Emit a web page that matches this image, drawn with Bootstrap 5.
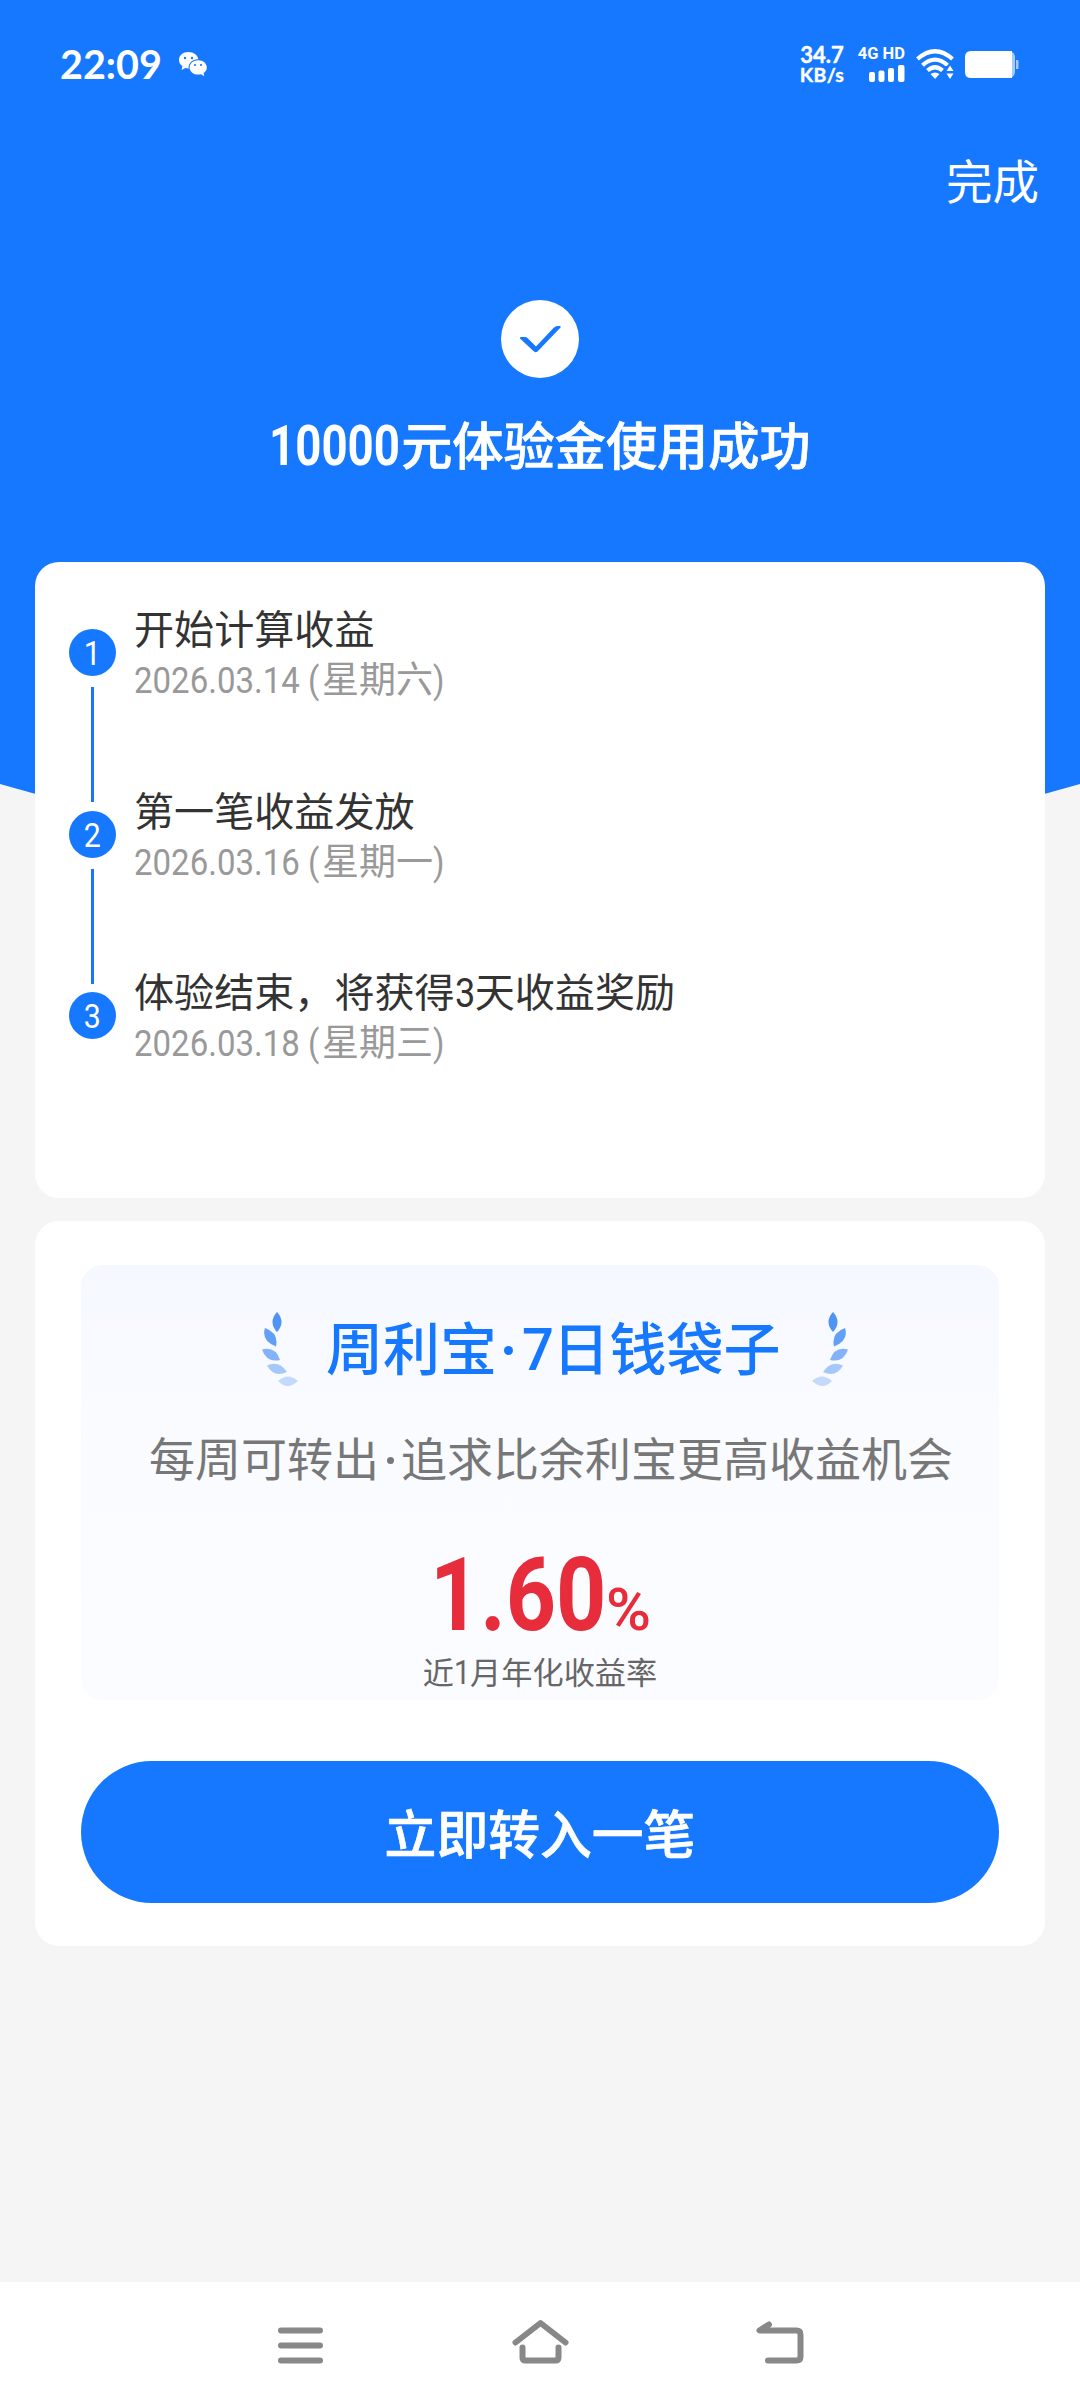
<!DOCTYPE html>
<html lang="zh-CN">
<head>
<meta charset="utf-8">
<meta name="viewport" content="width=device-width, initial-scale=1">
<title>体验金使用成功</title>
<link href="https://cdn.jsdelivr.net/npm/bootstrap@5.3.0/dist/css/bootstrap.min.css" rel="stylesheet">
<style>
:root{--brand:#1677ff}
body{font-family:"Noto Sans CJK SC",sans-serif;background:#f5f5f5;color:#333}
.screen{width:1080px;height:2408px;overflow:hidden;isolation:isolate}
.hero-bg{top:0;left:0;z-index:-1}
.statusbar{height:128px;padding:0 61px 0 60px}
.clock{font:700 39.5px/40px Lato,sans-serif}
.speed{font:700 22px/19px Lato,sans-serif;width:46px;-webkit-text-stroke:.4px #fff}
.speed small{font-size:19.5px;letter-spacing:.3px}
.net{font:700 16.5px/14px Roboto,sans-serif;width:48px;margin-left:12px}
.status-icon{margin-left:11px}
.topbar{height:106px;padding-right:41px;font-size:46.5px;line-height:102px}
.done-icon{margin-top:66px}
.headline{font-size:51.2px;line-height:60px;margin:35px 0 88px;font-weight:500;-webkit-text-stroke:.7px #fff}
.din{font-family:Roboto,sans-serif;display:inline-block;transform-origin:0 50%;line-height:1;white-space:nowrap}
.headline .din{font-size:55px;transform:scaleX(.83);margin-right:-26px;font-weight:700;-webkit-text-stroke:0}
.panel-card{margin:0 35px;border-radius:24px;width:1010px;border:0}
.steps-card{height:636px;padding:43px 34px 0}
.step{height:181.5px;gap:18px}
.step-text{margin-top:-3px}
.rail{width:47px;padding-top:24px}
.num{width:47px;height:47px;background:var(--brand);font:400 33px/49px Roboto,sans-serif}
.num span{display:inline-block;transform:scaleX(.92)}
.link-line{width:3px;height:115px;margin-top:11px;background:var(--brand)}
.step-title{font-size:40.1px;line-height:50px;color:#333}
.step-title .din{font-size:41px;transform:scaleX(.88);margin-right:-3px}
.step-date{font-size:37px;line-height:50px;color:#999;white-space:nowrap}
.step-date .din{font-size:37.5px;transform:scaleX(.88);width:188px}
.promo{margin-top:23px;height:725px;padding:44px 46px 0}
.offer{height:435px;border-radius:22px;background:linear-gradient(#f5f8ff,#f9fbff 35%,#fbfcff);padding-top:37px}
.offer-title{height:94px;color:var(--brand);font-size:57px;line-height:80px;font-weight:500;padding-left:181px}
.offer-name{margin:0 30px 8px 27px}
.middot{display:inline-block;border-radius:50%;background:currentColor;vertical-align:middle}
.offer-title .middot{width:9px;height:9px;margin:0 9px 9px 7px}
.offer-title .din{font-size:59px;font-weight:500;transform:scaleX(.95);margin-right:-3px}
.offer-sub{font-size:46px;line-height:60px;color:#777;margin-top:30px;padding-left:68px;white-space:nowrap}
.offer-sub .middot{width:7px;height:7px;margin:0 7px 7px 8px}
.rate{color:#e72c3b;height:104px;margin-top:57px;padding-left:349px}
.rate .din{line-height:104px}
.rate .big{font-size:102px;font-weight:700;width:176px;transform:scaleX(.86)}
.rate .pct{font-size:60px;font-weight:500;transform:scaleX(1.02)}
.rate-label{font-size:31.2px;line-height:40px;color:#666;margin-top:4px}
.rate-label .din{font-size:34px;transform:scaleX(.85);margin-right:-3px}
.go{height:142px;margin-top:61px;background:var(--brand);color:#fff;font-size:51.8px;font-weight:500;-webkit-text-stroke:.7px #fff;--bs-btn-hover-bg:#1677ff}
.navbar-sys{height:126px;margin-top:auto;padding-bottom:9px;gap:183px}
.navbar-sys svg{stroke:#888;stroke-width:6;fill:none;stroke-linecap:round;stroke-linejoin:round}
</style>
</head>
<body>
<div class="screen d-flex flex-column position-relative">
  <svg class="hero-bg position-absolute" width="1080" height="870" viewBox="0 0 1080 870"><path fill="#1677ff" d="M0 0H1080V784Q540 940 0 784Z"/></svg>

  <header class="statusbar d-flex align-items-center text-white">
    <span class="clock">22:09</span>
    <svg class="ms-3" width="30" height="27" viewBox="0 0 30 27"><g fill="#fff"><path d="M10.500 1C4.800 1 1 4.500 1 9c0 2.600 1.400 4.700 3.400 6.100L3.600 19l3.700-2c1 .3 2.200.4 3.400.4C10 12 14.500 8 20.400 8.200 19.500 4 15.500 1 10.500 1Z"/><path d="M20.200 9.200c-5 0-8.600 3.200-8.600 7.200s3.600 7.200 8.600 7.200c1 0 2-.1 2.900-.4l3.200 2-.7-3.200c1.900-1.300 3.200-3.300 3.200-5.600 0-4-3.600-7.200-8.600-7.200Z"/></g><g fill="#1677ff"><circle cx="7" cy="7" r="1.200"/><circle cx="14" cy="7" r="1.200"/><circle cx="17" cy="14" r="1.100"/><circle cx="23" cy="14" r="1.100"/></g></svg>
    <div class="speed ms-auto text-center">34.7<br><small>KB/s</small></div>
    <div class="net d-flex flex-column align-items-end"><span class="text-nowrap">4G HD</span>
      <svg class="mt-1" width="36" height="17" viewBox="0 0 36 17" fill="#fff"><rect y="7" width="6" height="10" rx="2"/><rect x="9.500" y="5.500" width="6" height="11.500" rx="2"/><rect x="19" y="3" width="6" height="14" rx="2"/><rect x="29" y="0" width="6.500" height="17" rx="2"/></svg>
    </div>
    <svg class="status-icon" width="38" height="32" viewBox="0 0 38 32"><g fill="none" stroke="#fff" stroke-width="4.200"><path d="M1.500 11Q19 -4.500 36.500 11"/><path d="M6.500 17.200Q19 6 31.500 17.200"/><path d="M11.500 22.500Q19 16 26.500 22.500"/></g><path fill="#fff" d="M14.500 26Q19 23 23.500 26L19 31Z"/><path fill="#1677ff" d="M29 18H38V32H29Z"/><path fill="#fff" d="M30.500 23 34 17.500 37.500 23ZM30.500 25.500H37.500L34 31Z"/></svg>
    <svg class="status-icon" width="54" height="27" viewBox="0 0 54 27"><rect x="10" width="40" height="27" rx="6" fill="#a5caff"/><path fill="#a5caff" d="M51 9h1.500q1 0 1 1.500v6q0 1.500-1 1.500H51z"/><path fill="#fff" d="M6 0H47V27H6Q0 27 0 21V6Q0 0 6 0Z"/></svg>
  </header>

  <div class="topbar text-end text-white">完成</div>

  <svg class="done-icon align-self-center flex-shrink-0" width="78" height="78" viewBox="0 0 78 78"><circle cx="39" cy="39" r="39" fill="#fff"/><path fill="#1677ff" d="M19 38.500Q18.500 37 20 37H24Q25.500 37 26.500 38L35 46.500 52.500 28Q54.500 26 56.500 26H58.500Q60.500 26 59.500 27.500L36.500 51.500Q34.800 53 33 51.500Z"/></svg>
  <h1 class="headline text-white text-center"><span class="din">10000</span>元体验金使用成功</h1>

  <section class="card panel-card steps-card">
    <div class="step d-flex"><div class="rail d-flex flex-column align-items-center"><div class="num rounded-circle text-white text-center flex-shrink-0"><span>1</span></div><i class="link-line flex-shrink-0"></i></div>
      <div class="step-text"><div class="step-title">开始计算收益</div><div class="step-date"><span class="din">2026.03.14 (</span>星期六<span class="din w-auto">)</span></div></div></div>
    <div class="step d-flex"><div class="rail d-flex flex-column align-items-center"><div class="num rounded-circle text-white text-center flex-shrink-0"><span>2</span></div><i class="link-line flex-shrink-0"></i></div>
      <div class="step-text"><div class="step-title">第一笔收益发放</div><div class="step-date"><span class="din">2026.03.16 (</span>星期一<span class="din w-auto">)</span></div></div></div>
    <div class="step d-flex"><div class="rail d-flex flex-column align-items-center"><div class="num rounded-circle text-white text-center flex-shrink-0"><span>3</span></div></div>
      <div class="step-text"><div class="step-title">体验结束，将获得<span class="din">3</span>天收益奖励</div><div class="step-date"><span class="din">2026.03.18 (</span>星期三<span class="din w-auto">)</span></div></div></div>
  </section>

  <section class="card panel-card promo">
    <div class="offer">
      <svg width="0" height="0" class="position-absolute"><defs><g id="laurel">
        <path fill="#4f93f5" d="M15 0Q24 10 15 20Q6 10 15 0Z"/>
        <path fill="#629ff5" d="M3 16Q17 21 14 34.500Q-1 28.500 3 16Z"/>
        <path fill="#83b2f8" d="M0 37.500Q13.500 34 18 48Q4.500 51 0 37.500Z"/>
        <path fill="#a5c8fb" d="M5 53.500Q17 48 25 60Q12 66 5 53.500Z"/>
        <path fill="#c3dafd" d="M16 69Q26 60 36 69Q25 79 16 69Z"/></g></defs></svg>
      <div class="offer-title d-flex align-items-center">
        <svg width="37" height="75" viewBox="0 0 37 75"><use href="#laurel"/></svg>
        <span class="offer-name text-nowrap">周利宝<i class="middot"></i><span class="din">7</span>日钱袋子</span>
        <svg width="37" height="75" viewBox="0 0 37 75"><use href="#laurel" transform="matrix(-1 0 0 1 37 0)"/></svg>
      </div>
      <div class="offer-sub">每周可转出<i class="middot"></i>追求比余利宝更高收益机会</div>
      <div class="rate text-nowrap"><span class="din big">1.60</span><span class="din pct">%</span></div>
      <div class="rate-label text-center">近<span class="din">1</span>月年化收益率</div>
    </div>
    <button class="btn go rounded-pill w-100">立即转入一笔</button>
  </section>

  <nav class="navbar-sys bg-white d-flex justify-content-center align-items-center">
    <svg width="57" height="46" viewBox="0 0 57 46"><path d="M9 12H48M9 27H48M9 42H48" transform="translate(0 .5)"/></svg>
    <svg width="57" height="46" viewBox="0 0 57 46"><path d="M3.500 24.500 28.500 5 53.500 24.500M10.500 29.500V39.500Q10.500 42.500 13.500 42.500H43.500Q46.500 42.500 46.500 39.500V29.500"/></svg>
    <svg width="57" height="46" viewBox="0 0 57 46"><path d="M17 6.500 7.500 12.500H44.500Q48.500 12.500 48.500 16.500V38.500Q48.500 42.500 44.500 42.500H16"/></svg>
  </nav>
</div>
<script src="https://cdn.jsdelivr.net/npm/bootstrap@5.3.0/dist/js/bootstrap.bundle.min.js"></script>
</body>
</html>
